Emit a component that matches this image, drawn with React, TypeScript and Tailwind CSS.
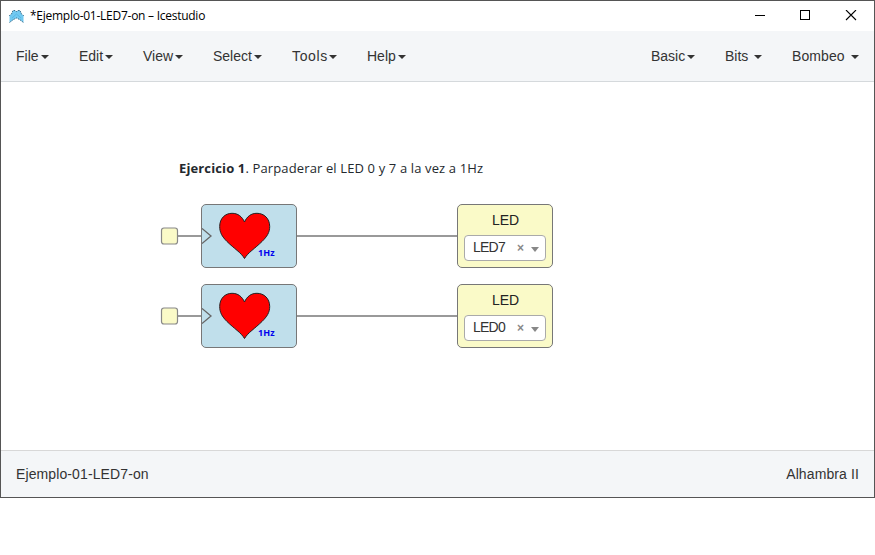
import React from 'react';

type MenuItem = { label: string; width: string; spacing: string };

const leftMenus: MenuItem[] = [
  { label: 'File', width: 'w-[33px]', spacing: 'tracking-normal' },
  { label: 'Edit', width: 'w-[34px]', spacing: 'tracking-normal' },
  { label: 'View', width: 'w-[40px]', spacing: 'tracking-normal' },
  { label: 'Select', width: 'w-[49px]', spacing: 'tracking-normal' },
  { label: 'Tools', width: 'w-[45px]', spacing: 'tracking-[0.65px]' },
  { label: 'Help', width: 'w-[39px]', spacing: 'tracking-normal' },
];

const rightMenus: MenuItem[] = [
  { label: 'Basic', width: 'w-[44px]', spacing: 'tracking-normal' },
  { label: 'Bits', width: 'w-[37px]', spacing: 'tracking-normal' },
  { label: 'Bombeo', width: 'w-[67px]', spacing: 'tracking-[0.1px]' },
];

function Menu({ label, width, spacing }: MenuItem) {
  return (
    <button className={`flex items-center justify-between whitespace-nowrap ${width}`}>
      <span className={spacing}>{label}</span>
      <span className="mt-[2px] h-0 w-0 shrink-0 border-x-4 border-t-4 border-x-transparent border-t-[#333]" />
    </button>
  );
}

function Logo() {
  return (
    <svg width="15" height="13" viewBox="0 0 15 13" className="shrink-0">
      <path d="M4 .5H6L7.500 1.500 9 .5H11L12.500 4 14.500 5.500V12.500L10.500 9.500 7.500 8 4.500 9.500.5 12.500V5.500L2.500 4Z" fill="#72c9f1" />
      <path d="M.5 6V5.500L2.500 4 4 .5H6L7.500 1.500 9 .5H11L12.500 4 14.500 5.500V6M.5 12.500 4.500 9.500 7.500 8 10.500 9.500 14.500 12.500" fill="none" stroke="#2c5f7c" strokeWidth=".9" strokeDasharray="1.500 1" />
      <path d="m3 8 4.500-4L12 8" fill="none" stroke="#4cb2e2" strokeWidth=".7" />
    </svg>
  );
}

function TitleBar() {
  return (
    <header className="flex h-[30px] shrink-0 items-center justify-between bg-white pl-[8px] pr-[17px]">
      <div className="flex items-center gap-[6px]">
        <Logo />
        <span className="font-['Open_Sans','Noto_Sans',sans-serif] text-[12px] leading-[16px] tracking-[-0.26px] text-black">*Ejemplo-01-LED7-on – Icestudio</span>
      </div>
      <div className="flex items-center gap-[34px] text-black">
        <svg width="12" height="12" shapeRendering="crispEdges"><path d="M2 5.500H12" stroke="currentColor" /></svg>
        <svg width="12" height="12" shapeRendering="crispEdges"><rect x="1.500" y="0.500" width="9" height="9" fill="none" stroke="currentColor" /></svg>
        <svg width="12" height="12"><path d="m1 0 10 10M11 0 1 10" stroke="currentColor" strokeWidth="1.100" /></svg>
      </div>
    </header>
  );
}

function HeartBlock({ top }: { top: string }) {
  return (
    <div className={`absolute left-[200px] h-[64px] w-[96px] rounded-[5px] border border-[#777] bg-[#c0dfeb] ${top}`}>
      <svg width="94" height="62" viewBox="202 205 94 62" className="block">
        <path d="m202 228.500 9 7.500-9 7.500" fill="none" stroke="#666" strokeWidth="1.300" />
        <path d="M244.500 258.500C241 252.500 234 248.500 227 241.500C222 236.500 219.700 232.500 219.700 226.500C219.700 218.500 225 213.300 232 213.300C238 213.300 242 216.500 244.500 222C247 216.500 251 213.300 257 213.300C264 213.300 269.700 218.500 269.700 226.500C269.700 232.500 267 236.500 262 241.500C255 248.500 248 252.500 244.500 258.500Z" fill="red" stroke="#222" />
      </svg>
      <span className="absolute left-[56px] top-[42px] font-['Open_Sans','Noto_Sans',sans-serif] text-[9px] font-bold leading-[12px] tracking-[0.1px] text-[#0000ee]">1Hz</span>
    </div>
  );
}

function LedBlock({ value, top }: { value: string; top: string }) {
  return (
    <div className={`absolute left-[456px] flex h-[64px] w-[96px] flex-col items-center rounded-[5px] border border-[#777] bg-[#fafac8] pt-[6px] ${top}`}>
      <span className="pl-px text-[14px] leading-[18px] tracking-[-0.1px] text-[#222]">LED</span>
      <div className="mt-[6px] flex h-[26px] w-[82px] items-center rounded-[4px] border border-[#aaa] bg-white pl-[8px] pr-[6px] text-[#333]">
        <span className="-mt-[2px] w-[44px] text-[14px] leading-[20px] tracking-[-0.75px]">{value}</span>
        <span className="w-[14px] text-[12px] font-bold leading-[20px] text-[#888]">×</span>
        <span className="mt-[3px] h-0 w-0 border-x-4 border-t-[5px] border-x-transparent border-t-[#888]" />
      </div>
    </div>
  );
}

function Canvas() {
  return (
    <main className="relative flex-1 bg-white">
      <p className="absolute left-[178px] top-[76px] whitespace-nowrap font-['Open_Sans','Noto_Sans',sans-serif] text-[13px] leading-[20px] tracking-[0.13px] text-[#24292e]">
        <strong className="font-bold">Ejercicio 1</strong>. Parpaderar el LED 0 y 7 a la vez a 1Hz
      </p>
      <svg width="873" height="368" viewBox="1 82 873 368" className="absolute inset-0" fill="none">
        <path d="M178 236H201M297 236H457M178 316H201M297 316H457" stroke="#999" strokeWidth="2" />
        <rect x="161.500" y="228" width="16" height="16" rx="2.500" fill="#fafac8" stroke="#888" strokeWidth="1.200" />
        <rect x="161.500" y="308" width="16" height="16" rx="2.500" fill="#fafac8" stroke="#888" strokeWidth="1.200" />
      </svg>
      <HeartBlock top="top-[122px]" />
      <HeartBlock top="top-[202px]" />
      <LedBlock value="LED7" top="top-[122px]" />
      <LedBlock value="LED0" top="top-[202px]" />
    </main>
  );
}

export default function App() {
  return (
    <div className="h-[555px] w-[875px] overflow-hidden bg-white font-['Liberation_Sans',Arial,sans-serif]">
      <div className="flex h-[498px] flex-col border border-[#555]">
        <TitleBar />
        <nav className="flex h-[51px] shrink-0 items-center justify-between border-b border-[#d5d9dc] bg-[#f4f6f8] px-[15px] text-[14px] leading-[20px] text-[#333]">
          <div className="flex gap-[30px]">{leftMenus.map((m) => <Menu key={m.label} {...m} />)}</div>
          <div className="flex gap-[30px]">{rightMenus.map((m) => <Menu key={m.label} {...m} />)}</div>
        </nav>
        <Canvas />
        <footer className="flex h-[47px] shrink-0 items-center justify-between border-t border-[#d8d8d8] bg-[#f4f6f8] px-[15px] text-[14px] leading-[20px] tracking-[0.11px] text-[#333]">
          <span>Ejemplo-01-LED7-on</span>
          <span>Alhambra II</span>
        </footer>
      </div>
    </div>
  );
}
